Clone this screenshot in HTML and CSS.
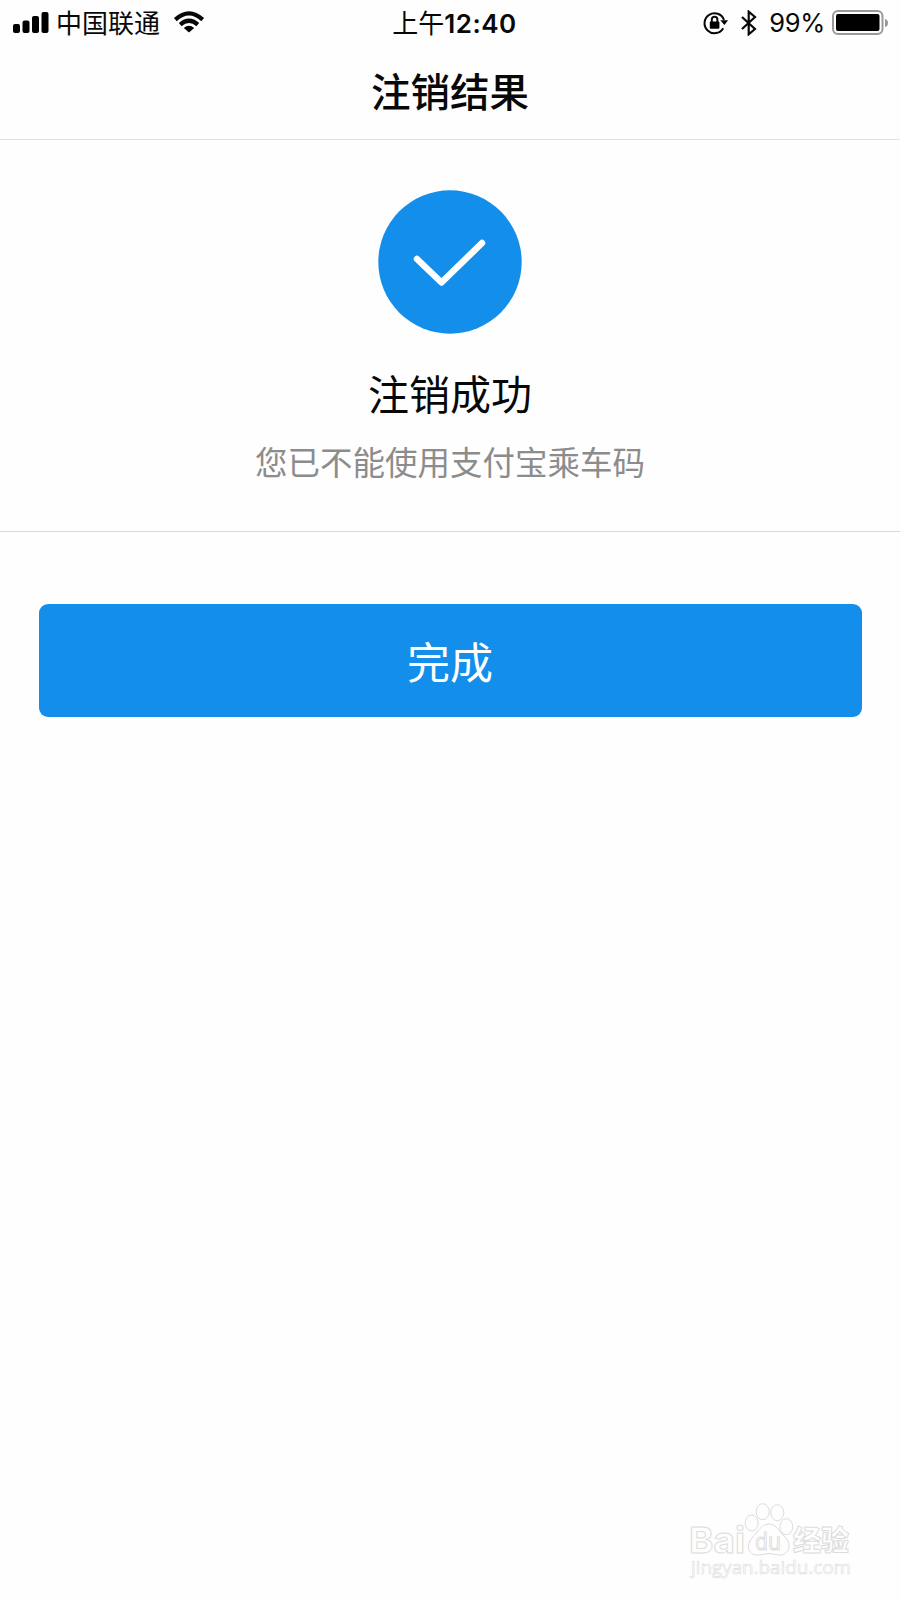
FILE: index.html
```html
<!DOCTYPE html>
<html lang="zh-CN">
<head>
<meta charset="utf-8">
<title>注销结果</title>
<link rel="stylesheet" href="styles.css">
</head>
<body>
<div class="screen">
  <header class="status">
    <div class="status-left">
      <svg class="signal" width="36" height="24" viewBox="0 0 36 24">
        <rect x="0" y="13" width="7" height="9" rx="2"/><rect x="9.5" y="9.5" width="7" height="12.500" rx="2"/><rect x="19" y="5" width="7" height="17" rx="2"/><rect x="28.5" y="1" width="7" height="21" rx="2"/>
      </svg>
      <span class="carrier">中国联通</span>
      <svg class="wifi" width="32" height="24" viewBox="0 0 32 24">
        <path d="M16 22.5l-5.2-4.6q5.2-4.3 10.4 0z"/>
        <path class="wave" d="M7.2 14.6q8.8-7.6 17.6 0M2.3 9.6q13.7-12.4 27.4 0"/>
      </svg>
    </div>
    <div class="time">上午<span class="digits">12:40</span></div>
    <div class="status-right">
      <svg class="lock" width="26" height="24" viewBox="0 0 26 24">
        <path class="ring" d="M20.2 17.2A10 10 0 1 1 21 9"/>
        <path d="M17.3 9.2h7.8L21.4 14z"/>
        <rect x="6.8" y="10.5" width="9.6" height="7.2" rx="1"/>
        <path class="shackle" d="M8.8 11V8.6a2.8 2.8 0 0 1 5.6 0V11"/>
      </svg>
      <svg class="bluetooth" width="16" height="26" viewBox="0 0 16 26">
        <path d="M1 7l13 12-6.3 5.3V1.700L14 7 1 19"/>
      </svg>
      <span class="percent">99%</span>
      <svg class="battery" width="57" height="26" viewBox="0 0 57 26">
        <rect class="case" x="1" y="1" width="49.500" height="23" rx="5"/>
        <rect x="4" y="4" width="43.500" height="17" rx="2"/>
        <path class="cap" d="M53 9q3 .5 3 4t-3 4z"/>
      </svg>
    </div>
  </header>
  <h1 class="title">注销结果</h1>
  <main>
    <section class="result">
      <svg class="check" width="144" height="144" viewBox="0 0 144 144">
        <circle cx="72" cy="72" r="71.700"/>
        <path d="M39 69L63.500 92.500 104 53"/>
      </svg>
      <h2 class="headline">注销成功</h2>
      <p class="note">您已不能使用支付宝乘车码</p>
    </section>
    <button class="done">完成</button>
  </main>
  <svg class="watermark" width="180" height="90" viewBox="0 0 180 90">
    <g class="outline">
      <text class="bai" x="7" y="63" textLength="56" lengthAdjust="spacingAndGlyphs">Bai</text>
      <ellipse cx="69.700" cy="33" rx="6.500" ry="8"/>
      <ellipse cx="80.700" cy="21.700" rx="6.500" ry="8"/>
      <ellipse cx="95.300" cy="22.700" rx="6.500" ry="8"/>
      <ellipse cx="104.300" cy="36.700" rx="6.500" ry="8"/>
      <path d="M87 34C95 34 97 42 103 47C111 55 106 66 97 65Q87 62 77 65C67 66 63 56 70 48C76 42 79 34 87 34Z"/>
      <text class="du" x="73" y="60" textLength="26" lengthAdjust="spacingAndGlyphs">du</text>
      <text class="exp" x="111" y="61" textLength="56" lengthAdjust="spacingAndGlyphs">经验</text>
      <text class="site" x="9" y="84" textLength="160" lengthAdjust="spacingAndGlyphs">jingyan.baidu.com</text>
    </g>
  </svg>
</div>
</body>
</html>
```
FILE: styles.css
```css
body {
  margin: 0;
  background: #fefefe;
  color: #080808;
  font-family: "Noto Sans CJK SC", sans-serif;
}
svg { display: block; flex: none; }
.screen {
  position: relative;
  height: 1600px;
  overflow: hidden;
}
.status {
  display: grid;
  grid-template-columns: 1fr auto 1fr;
  align-items: center;
  box-sizing: border-box;
  height: 45px;
  padding: 0 12px 2px 13px;
  font-size: 26px;
  line-height: 44px;
}
.status-left, .status-right { display: flex; align-items: center; }
.status-right { justify-content: flex-end; }
.signal { margin-top: -1px; }
.carrier { height: 46px; margin-left: 7px; }
.wifi { margin: -2px 0 0 13px; }
.wave { fill: none; stroke: #080808; stroke-width: 4.2; }
.time { height: 46px; margin-left: 8px; font-weight: 400; }
.digits { font: 600 26px Inter, sans-serif; letter-spacing: 0.5px; }
.lock { margin-top: -1px; }
.ring, .shackle { fill: none; stroke: #080808; stroke-width: 2; }
.bluetooth { margin: 0 12px 0 12px; }
.bluetooth path { fill: none; stroke: #080808; stroke-width: 2.2; }
.percent { font: 400 25.5px/44px Inter, sans-serif; letter-spacing: -0.3px; }
.battery { margin: 0 -1px 0 7px; }
.case { fill: none; stroke: #999; stroke-width: 2; }
.cap { fill: #999; }
.title {
  box-sizing: border-box;
  height: 95px;
  margin: 0;
  border-bottom: 1px solid #e2e2e2;
  font-size: 39.5px;
  font-weight: 500;
  line-height: 90px;
  text-align: center;
}
.result {
  display: flex;
  flex-direction: column;
  align-items: center;
  box-sizing: border-box;
  height: 392px;
  padding-top: 50px;
  border-bottom: 1px solid #d8d8d8;
}
.check circle { fill: #138eea; }
.check path { fill: none; stroke: #fff; stroke-width: 6.5; stroke-linecap: round; stroke-linejoin: round; }
.headline { margin: 28px 0 0; font-size: 41px; font-weight: 400; line-height: 60px; }
.note { margin: 15px 0 0; color: #8c8c8c; font-size: 32.5px; font-weight: 400; line-height: 48px; }
.done {
  display: block;
  width: 823px;
  height: 113px;
  margin: 72px auto 0;
  padding: 0;
  border: 0;
  border-radius: 9px;
  background: #138eea;
  color: #fff;
  font: 400 43px/113px "Noto Sans CJK SC", sans-serif;
}
.watermark { position: absolute; left: 682px; top: 1490px; }
.outline { fill: #fefefe; stroke: #dcdcdc; stroke-width: 1; }
.bai { font: 700 36px Inter, sans-serif; }
.du { font: 400 24px "Open Sans", sans-serif; }
.exp { font: 900 28px "Noto Sans CJK SC", sans-serif; }
.site { font: 400 19px "Open Sans", sans-serif; stroke-width: 0.6; }
```
